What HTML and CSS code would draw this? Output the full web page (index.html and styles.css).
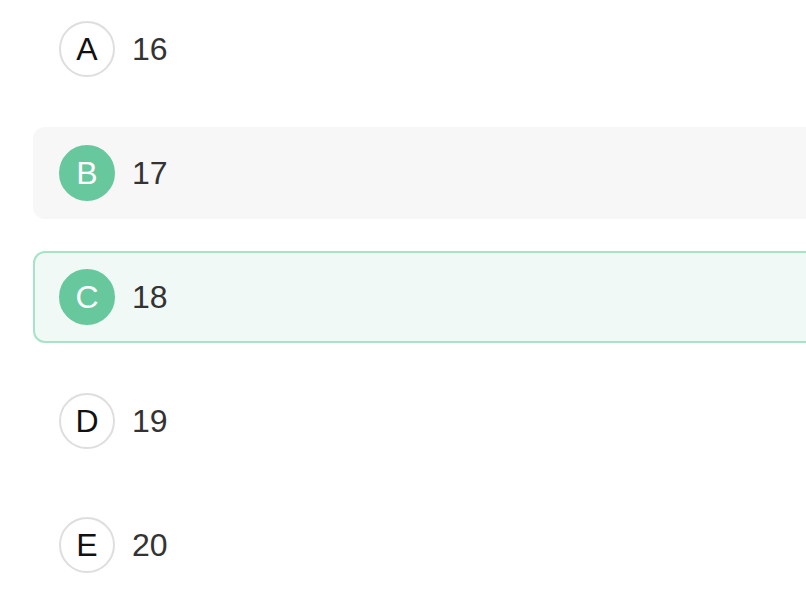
FILE: index.html
```html
<!DOCTYPE html>
<html>
<head>
<meta charset="utf-8">
<link rel="stylesheet" href="styles.css">
</head>
<body>
<div class="options">
  <div class="option"><span class="badge">A</span><span class="label">16</span></div>
  <div class="option hover"><span class="badge filled">B</span><span class="label">17</span></div>
  <div class="option selected"><span class="badge filled">C</span><span class="label">18</span></div>
  <div class="option"><span class="badge">D</span><span class="label">19</span></div>
  <div class="option"><span class="badge">E</span><span class="label">20</span></div>
</div>
</body>
</html>
```
FILE: styles.css
```css
html, body {
  margin: 0;
  padding: 0;
  background: #ffffff;
  overflow: hidden;
}
body {
  width: 806px;
  height: 600px;
  font-family: "Liberation Sans", Arial, sans-serif;
}
.options {
  display: flex;
  flex-direction: column;
  gap: 32px;
  padding: 3px 0 0 33px;
  margin-right: -30px;
}
.option {
  display: flex;
  align-items: center;
  gap: 17px;
  height: 92px;
  box-sizing: border-box;
  padding-left: 25px;
  border: 1px solid transparent;
  border-radius: 12px;
}
.option.hover {
  background: #f7f7f7;
}
.option.selected {
  background: #f0f9f5;
  border: 2px solid #a6e3c8;
  padding-left: 24px;
}
.badge {
  width: 56px;
  height: 56px;
  box-sizing: border-box;
  border-radius: 50%;
  border: 2px solid #dedede;
  display: flex;
  align-items: center;
  justify-content: center;
  font-size: 32px;
  color: #111;
  background: #fff;
}
.badge.filled {
  background: #67c89d;
  border-color: #67c89d;
  color: #ffffff;
}
.label {
  font-size: 32px;
  color: #333;
}
```
